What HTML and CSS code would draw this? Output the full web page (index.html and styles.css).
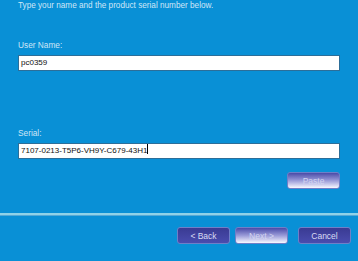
FILE: index.html
```html
<!DOCTYPE html>
<html lang="en">
<head>
  <meta charset="UTF-8" />
  <title>Registration</title>
  <link rel="stylesheet" href="styles.css">
</head>
<body>
  <div class="panel">
    <p class="intro">Type your name and the product serial number below.</p>

    <label class="field-label">User Name:</label>
    <div class="field">pc0359</div>

    <label class="field-label serial-label">Serial:</label>
    <div class="field">7107-0213-T5P6-VH9Y-C679-43H1<span class="caret"></span></div>

    <div class="paste-row">
      <button class="btn btn-light">Paste</button>
    </div>
  </div>

  <div class="separator"></div>

  <div class="footer">
    <button class="btn">&lt; Back</button>
    <button class="btn btn-light">Next &gt;</button>
    <button class="btn btn-cancel">Cancel</button>
  </div>
</body>
</html>
```

FILE: styles.css
```css
body {
  margin: 0;
  height: 261px;
  overflow: hidden;
  background: #0990d6;
  font-family: 'Liberation Sans', Arial, sans-serif;
  font-size: 9px;
  color: #cfe6f6;
}

.panel {
  padding: 0 18px;
  display: flex;
  flex-direction: column;
}

.intro {
  margin: 0;
  line-height: 11px;
  font-size: 8.2px;
}

.field-label {
  display: block;
  margin-top: 29px;
  line-height: 11px;
  font-size: 8.3px;
}

.serial-label {
  margin-top: 57px;
}

.field {
  margin-top: 4px;
  height: 14px;
  line-height: 14px;
  padding: 0 2px;
  background: #fff;
  border: 1px solid #2c6e99;
  color: #111;
  font-size: 8px;
}

.caret {
  display: inline-block;
  width: 1px;
  height: 10px;
  background: #000;
  vertical-align: -1px;
}

.paste-row {
  display: flex;
  justify-content: flex-end;
  margin-top: 13px;
}

.separator {
  margin-top: 24px;
  height: 2px;
  background: #8fd2e8;
  border-bottom: 1px solid #55a9d6;
}

.footer {
  display: flex;
  justify-content: flex-end;
  gap: 5px;
  padding: 11px 7px 0 0;
}

.btn {
  width: 53px;
  height: 17px;
  padding: 0;
  border: 1px solid #6f7fc8;
  border-radius: 3px;
  background: linear-gradient(#3a3b93, #4a4cae);
  color: #d9dbf2;
  font-family: 'Liberation Sans', Arial, sans-serif;
  font-size: 8.5px;
}

.btn-light {
  background: linear-gradient(#4a4ba8, #9a9bd8 50%, #f8f8ff);
  color: #d2d4f0;
}

.btn-cancel {
  margin-left: 5px;
}
```
